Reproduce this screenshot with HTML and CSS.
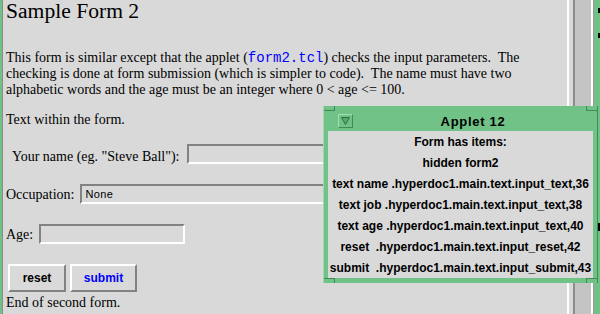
FILE: index.html
```html
<!DOCTYPE html>
<html>
<head>
<meta charset="utf-8">
<title>Sample Form 2</title>
<link rel="stylesheet" href="styles.css">
</head>
<body>
<div class="edge-green"></div>
<div class="edge-line"></div>
<main class="page">
  <h1 class="title">Sample Form 2</h1>
  <p class="intro">This form is similar except that the applet (<code class="code">form2.tcl</code>) checks the input parameters.&nbsp; The<br>checking is done at form submission (which is simpler to code).&nbsp; The name must have two<br>alphabetic words and the age must be an integer where 0 &lt; age &lt;= 100.</p>
  <p class="plain">Text within the form.</p>
  <div class="row row-name">
    <span class="label label-name">Your name (eg. "Steve Ball"):</span>
    <span class="field field-name"></span>
  </div>
  <div class="row row-occ">
    <span class="label label-low">Occupation:</span>
    <span class="field field-occ"><span class="field-text">None</span></span>
  </div>
  <div class="row row-age">
    <span class="label label-low">Age:</span>
    <span class="field field-age"></span>
  </div>
  <div class="buttons">
    <span class="btn btn-reset">reset</span>
    <span class="btn btn-submit">submit</span>
  </div>
  <p class="plain end">End of second form.</p>
</main>
<div class="sb sb-white"></div>
<div class="sb sb-gap"></div>
<div class="sb sb-gray"></div>
<div class="sb sb-trough"></div>
<div class="sb sb-white"></div>
<div class="sb sb-dark"></div>
<div class="sb sb-green">
  <span class="mark mark-1"></span>
  <span class="mark mark-2"></span>
  <span class="mark mark-3"></span>
</div>

<section class="applet">
  <span class="corner corner-tl"></span>
  <span class="corner corner-tr"></span>
  <span class="corner corner-bl"></span>
  <span class="corner corner-br"></span>
  <div class="titlebar">
    <span class="menu-btn">
      <svg width="9" height="8" viewBox="0 0 9 8"><path d="M0.5 0.5 H8.5 L4.5 7.5 Z" fill="#5aa86f" stroke="#2f6f42" stroke-width="1"/></svg>
    </span>
    <span class="applet-title">Applet 12</span>
  </div>
  <div class="applet-body">
    <div class="item">Form has items:</div>
    <div class="item">hidden form2</div>
    <div class="item">text name .hyperdoc1.main.text.input_text,36</div>
    <div class="item">text job .hyperdoc1.main.text.input_text,38</div>
    <div class="item">text age .hyperdoc1.main.text.input_text,40</div>
    <div class="item">reset  .hyperdoc1.main.text.input_reset,42</div>
    <div class="item">submit  .hyperdoc1.main.text.input_submit,43</div>
  </div>
</section>
</body>
</html>
```

FILE: styles.css
```css
html, body {
  margin: 0;
  padding: 0;
}
body {
  width: 600px;
  height: 314px;
  overflow: hidden;
  background: #d9d9d9;
  display: flex;
  position: relative;
  font-family: "Liberation Serif", "Times New Roman", serif;
  color: #000;
}
.edge-green { width: 2px; background: #6fc185; flex: none; }
.edge-line { width: 1px; background: #8c8c8c; flex: none; }
.page {
  flex: 1;
  padding-left: 3px;
  min-width: 0;
  overflow: hidden;
}
.title {
  margin: 0;
  font-size: 21.6px;
  line-height: 22px;
  font-weight: normal;
  height: 22px;
}
.intro {
  margin: 27.5px 0 0;
  font-size: 14px;
  line-height: 15.5px;
  white-space: nowrap;
}
.code {
  font-family: "Liberation Mono", "Courier New", monospace;
  font-size: 14px;
  color: #0000ff;
}
.plain {
  margin: 14.5px 0 0;
  font-size: 14px;
  line-height: 15.5px;
  white-space: nowrap;
}
.row {
  display: flex;
  align-items: flex-end;
  gap: 5px;
  height: 20px;
  white-space: nowrap;
}
.row-name { margin-top: 17px; gap: 8px; }
.row-occ { margin-top: 20px; gap: 6px; }
.row-age { margin-top: 20px; gap: 6px; }
.label {
  font-size: 14px;
  line-height: 15.5px;
}
.label-name { padding-left: 6px; }
.label-low { margin-bottom: 2px; }
.field {
  box-sizing: border-box;
  height: 20px;
  flex: none;
  border-top: 2px solid #828282;
  border-left: 2px solid #828282;
  border-bottom: 2px solid #ffffff;
  border-right: 2px solid #ffffff;
  background: #d9d9d9;
}
.field-name { width: 220px; }
.field-occ { width: 320px; display: flex; align-items: center; padding-left: 3px; }
.field-age { width: 146px; }
.field-text {
  font-family: "Liberation Sans", Arial, sans-serif;
  font-size: 11px;
  letter-spacing: 0.4px;
}
.buttons {
  display: flex;
  gap: 4px;
  margin-top: 20px;
  padding-left: 2px;
}
.btn {
  box-sizing: border-box;
  height: 28px;
  display: flex;
  align-items: center;
  justify-content: center;
  font-family: "Liberation Sans", Arial, sans-serif;
  font-weight: bold;
  font-size: 12px;
  border-top: 2px solid #ffffff;
  border-left: 2px solid #ffffff;
  border-bottom: 2px solid #828282;
  border-right: 2px solid #828282;
}
.btn-reset { width: 58px; color: #000; }
.btn-submit { width: 67px; color: #0000ff; }
.end { margin-top: 2.5px; }

.sb { flex: none; }
.sb-white { width: 2px; background: #ffffff; }
.sb-gap { width: 4px; background: #d9d9d9; }
.sb-gray { width: 2px; background: #8c8c8c; }
.sb-trough { width: 16px; background: #c4c4c4; }
.sb-dark { width: 1px; background: #9a9a9a; }
.sb-green {
  width: 6px;
  background: #6fc185;
  display: flex;
  flex-direction: column;
  align-items: flex-end;
}
.mark { width: 2px; height: 5px; background: #000; }
.mark-1 { margin-top: 8px; }
.mark-2 { margin-top: 20px; }
.mark-3 { margin-top: 185px; height: 8px; }

/* applet window */
.applet {
  position: absolute;
  left: 323px;
  top: 106px;
  width: 275px;
  height: 177px;
  box-sizing: border-box;
  padding: 5px 4px 5px 4px;
  background: #70c286;
  border-left: 1px solid #9ed8ad;
  border-right: 1px solid #3f8a55;
  display: flex;
  flex-direction: column;
  font-family: "Liberation Sans", Arial, sans-serif;
}
.corner { position: absolute; width: 10px; height: 4px; border-color: #3f8a55; border-style: solid; border-width: 0; }
.corner-tl { left: 0; top: 0; border-right-width: 1px; border-bottom-width: 1px; }
.corner-tr { right: 0; top: 0; border-left-width: 1px; border-bottom-width: 1px; }
.corner-bl { left: 0; bottom: 0; border-right-width: 1px; border-top-width: 1px; }
.corner-br { right: 0; bottom: 0; border-left-width: 1px; border-top-width: 1px; }
.titlebar {
  height: 20px;
  display: flex;
  align-items: center;
  flex: none;
}
.menu-btn {
  box-sizing: border-box;
  width: 15px;
  height: 14px;
  margin-left: 10px;
  border-top: 1px solid #a4dcb3;
  border-left: 1px solid #a4dcb3;
  border-bottom: 1px solid #3f8a55;
  border-right: 1px solid #3f8a55;
  display: flex;
  align-items: center;
  justify-content: center;
}
.applet-title {
  flex: 1;
  text-align: center;
  font-weight: bold;
  font-size: 13px;
  letter-spacing: 0.7px;
  color: #000;
}
.applet-body {
  flex: 1;
  background: #d9d9d9;
  display: flex;
  flex-direction: column;
  align-items: center;
  padding-top: 0.5px;
  overflow: hidden;
}
.item {
  font-weight: bold;
  font-size: 12px;
  line-height: 21px;
  white-space: pre;
  letter-spacing: 0;
}
```
